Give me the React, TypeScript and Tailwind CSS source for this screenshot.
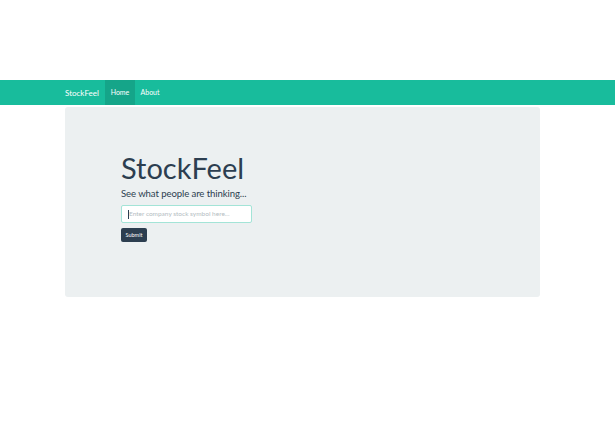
export default function App() {
  return (
    <div className="min-h-[424px] bg-white pt-[80px]" style={{ fontFamily: 'Lato, "Open Sans", sans-serif' }}>
      <nav className="h-[25px] bg-[#18bc9c]">
        <div className="flex h-full items-stretch pl-[65px]">
          <a className="flex w-[40px] items-center text-[8px] text-white">StockFeel</a>
          <a className="flex w-[30px] items-center justify-center bg-[#15a589] text-[7px] text-white">Home</a>
          <a className="flex w-[30px] items-center justify-center text-[7px] text-white">About</a>
        </div>
      </nav>
      <div className="ml-[65px] mt-[2px] h-[190px] w-[475px] rounded-[3px] bg-[#ecf0f1] pl-[56px] pt-[43px]">
        <h1 className="text-[29px] leading-[36px] text-[#2c3e50]">StockFeel</h1>
        <p className="mt-[1px] text-[9.6px] leading-[14px] tracking-[-0.1px] text-[#2c3e50]">See what people are thinking...</p>
        <div className="mt-[4px] flex h-[18px] w-[131px] items-center rounded-[2px] border border-[#a3e4d7] bg-white pl-[6px]">
          <span className="h-[9px] w-px bg-[#2c3e50]" />
          <span className="text-[6.5px] text-[#b4bcc2]">Enter company stock symbol here...</span>
        </div>
        <button className="mt-[5px] flex h-[14px] w-[26px] items-center justify-center rounded-[2px] bg-[#2c3e50] text-[5.5px] text-white">
          Submit
        </button>
      </div>
    </div>
  );
}
